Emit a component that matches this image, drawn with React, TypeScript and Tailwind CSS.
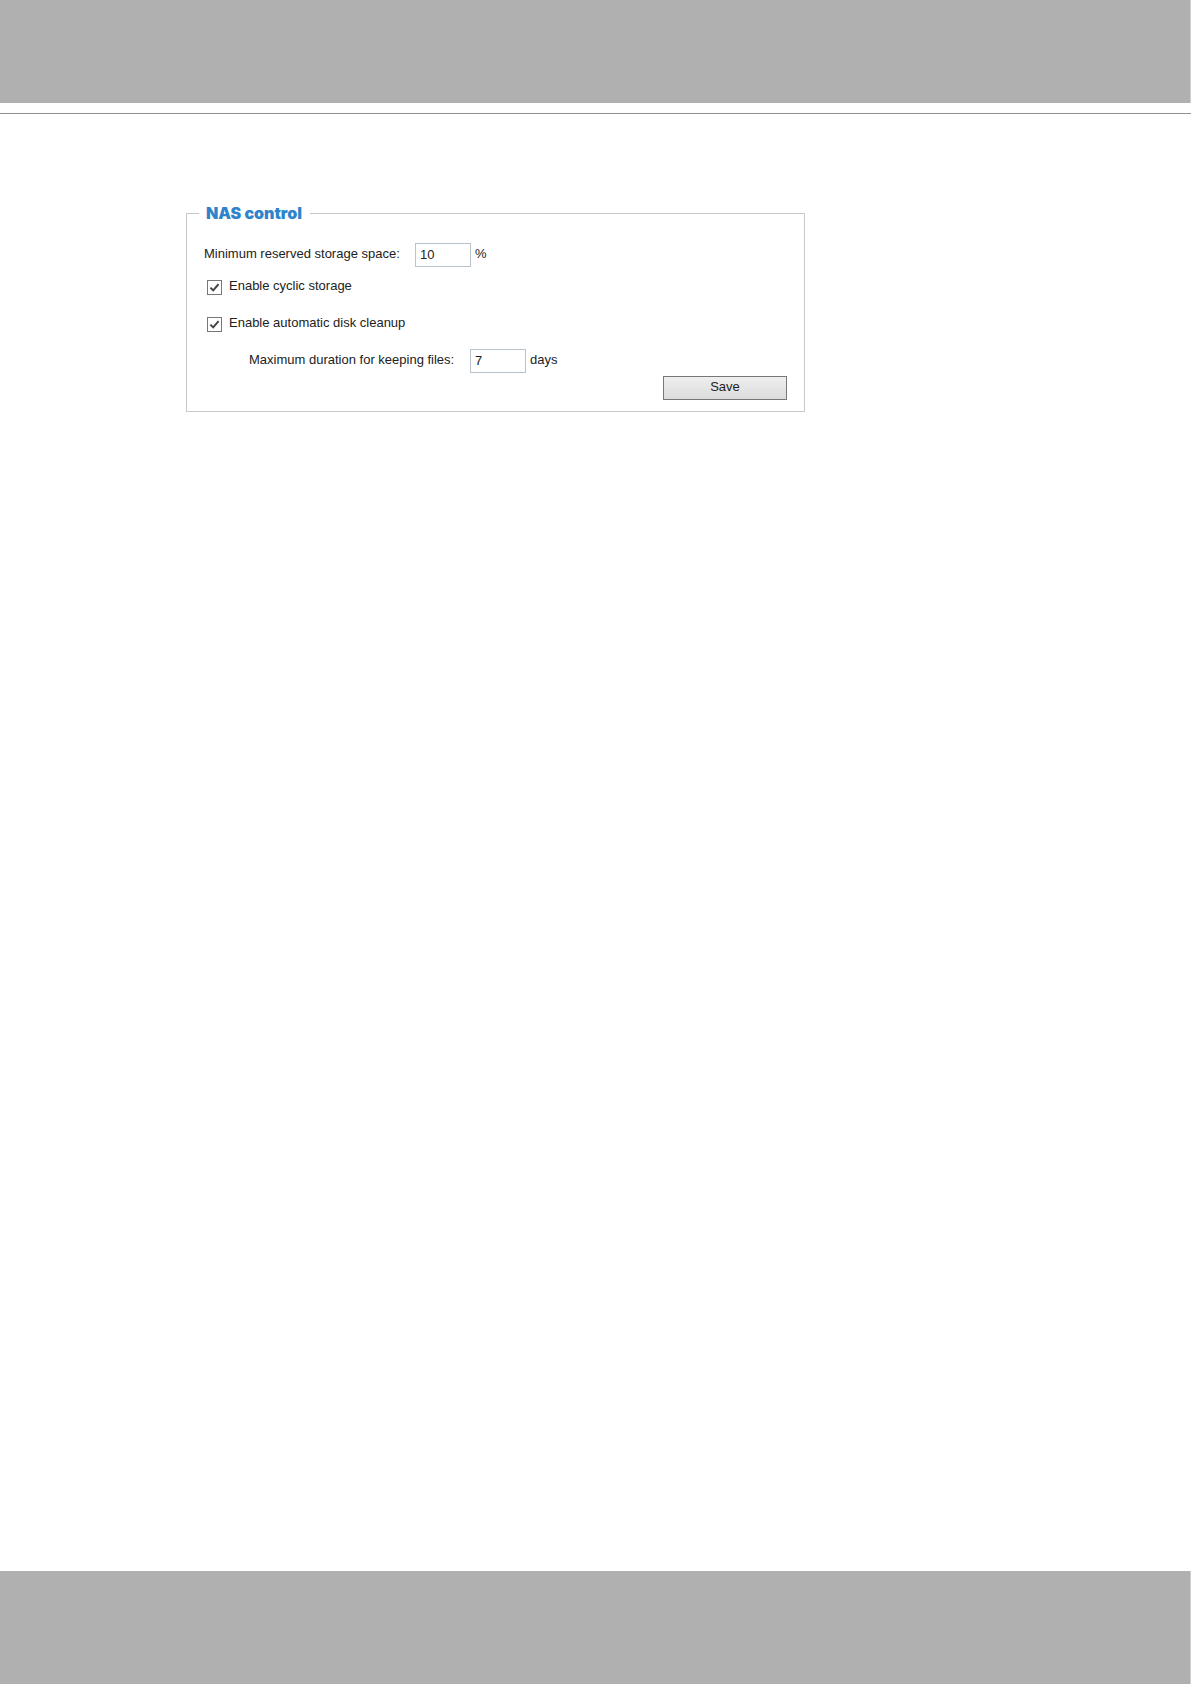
import { useState } from "react";
import type { ReactNode } from "react";

function NumberField({
  id,
  label,
  labelWidth,
  unit,
  value,
  onChange,
}: {
  id: string;
  label: string;
  labelWidth: string;
  unit: string;
  value: string;
  onChange: (value: string) => void;
}) {
  return (
    <div className="flex h-6 items-center">
      <label htmlFor={id} className={`${labelWidth} shrink-0 pb-0.5 whitespace-nowrap`}>
        {label}
      </label>
      <input
        id={id}
        type="text"
        value={value}
        onChange={(e) => onChange(e.target.value)}
        className="h-6 w-14 border border-[#b9c3cb] bg-white px-1 pb-0.5 outline-none"
      />
      <span className="ml-1 pb-0.5">{unit}</span>
    </div>
  );
}

function CheckField({ children }: { children: ReactNode }) {
  return (
    <label className="flex h-6 items-center pl-[3px]">
      <span className="relative mr-[7px] size-[15px]">
        <input
          type="checkbox"
          defaultChecked
          className="peer block size-[15px] appearance-none border border-[#777] bg-white"
        />
        <svg
          viewBox="0 0 15 15"
          className="pointer-events-none absolute inset-0 hidden size-[15px] peer-checked:block"
          aria-hidden
        >
          <path d="M3.4 7.6 6.2 10.4 11.6 4.2" fill="none" stroke="#444" strokeWidth="2" />
        </svg>
      </span>
      <span className="pb-0.5">{children}</span>
    </label>
  );
}

export default function App() {
  const [reserved, setReserved] = useState("10");
  const [days, setDays] = useState("7");

  return (
    <div className="flex min-h-screen flex-col bg-white font-['Liberation_Sans',Arial,sans-serif] text-[13px] leading-5 text-[#222]">
      <header className="h-[103px] border-r border-[#d0d0d0] bg-[#b0b0b0]" />
      <hr className="mt-[10px] border-[#919191]" />

      <main className="grow pt-[89px] pl-[186px]">
        <form className="max-w-[619px]" onSubmit={(e) => e.preventDefault()}>
          <fieldset className="border border-[#c8c8c8] px-3 pb-[11px]">
            <legend className="pr-2 pl-[7px] font-[Inter,sans-serif] text-base leading-5 font-black text-[#2f83cc]">
              NAS control
            </legend>
            <div className="px-[5px] pt-5">
              <NumberField
                id="reserved-space"
                label="Minimum reserved storage space:"
                labelWidth="w-[211px]"
                unit="%"
                value={reserved}
                onChange={setReserved}
              />
              <div className="mt-2 flex flex-col gap-[13px]">
                <CheckField>Enable cyclic storage</CheckField>
                <CheckField>Enable automatic disk cleanup</CheckField>
                <div className="pl-[45px]">
                  <NumberField
                    id="keep-days"
                    label="Maximum duration for keeping files:"
                    labelWidth="w-[221px]"
                    unit="days"
                    value={days}
                    onChange={setDays}
                  />
                </div>
              </div>
              <div className="mt-[3px] flex justify-end">
                <button
                  type="submit"
                  className="h-6 w-31 border border-[#777] bg-linear-to-b from-[#efefef] to-[#dcdcdc] pb-0.5"
                >
                  Save
                </button>
              </div>
            </div>
          </fieldset>
        </form>
      </main>

      <footer className="h-[113px] border-r border-[#d0d0d0] bg-[#b0b0b0]" />
    </div>
  );
}
